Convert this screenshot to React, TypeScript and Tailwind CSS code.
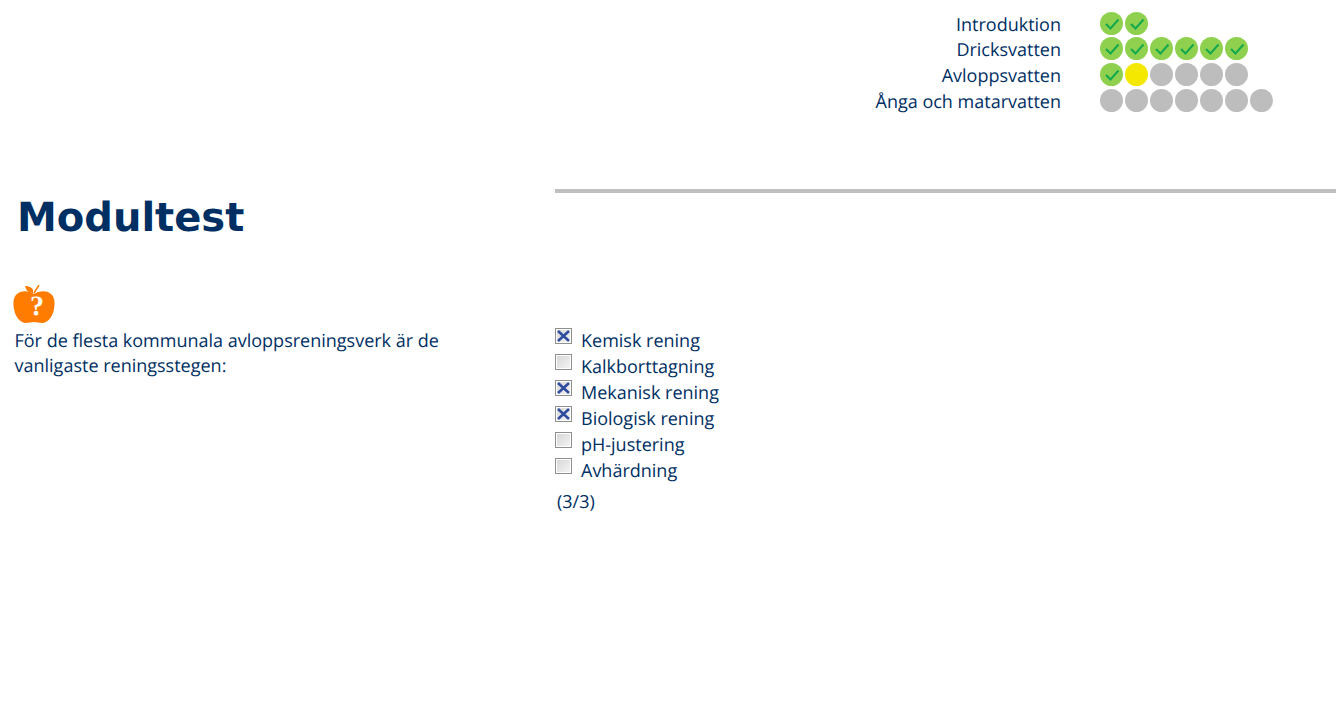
const progress = [
  { name: "Introduktion", rowClass: "h-[25px]", states: ["done", "done"] },
  { name: "Dricksvatten", rowClass: "h-[26px]", states: ["done", "done", "done", "done", "done", "done"] },
  { name: "Avloppsvatten", rowClass: "h-[26px]", states: ["done", "current", "todo", "todo", "todo", "todo"] },
  { name: "Ånga och matarvatten", rowClass: "h-[26px]", states: ["todo", "todo", "todo", "todo", "todo", "todo", "todo"] },
];

const options = [
  { label: "Kemisk rening", checked: true },
  { label: "Kalkborttagning", checked: false },
  { label: "Mekanisk rening", checked: true },
  { label: "Biologisk rening", checked: true },
  { label: "pH-justering", checked: false },
  { label: "Avhärdning", checked: false },
];

const Dot = ({ state }: { state: string }) => {
  if (state === "done") {
    return (
      <svg width="23" height="23" viewBox="0 0 23 23" className="shrink-0">
        <circle cx="11.5" cy="11.5" r="11.5" fill="#8fd14f" />
        <path d="M6 12 L10.5 16.5 L18.5 7.5" fill="none" stroke="#12a84e" strokeWidth="2" />
      </svg>
    );
  }
  return (
    <span
      className={
        state === "current"
          ? "w-[23px] h-[23px] rounded-full shrink-0 bg-[#f5e800]"
          : "w-[23px] h-[23px] rounded-full shrink-0 bg-[#bdbdbd]"
      }
    />
  );
};

const Checkbox = ({ checked }: { checked: boolean }) => (
  <svg width="17" height="16" viewBox="0 0 17 16" className="shrink-0">
    <defs>
      <linearGradient id="boxFill" x1="0" y1="0" x2="1" y2="1">
        <stop offset="0" stopColor="#d4d4d4" />
        <stop offset="1" stopColor="#f6f6f6" />
      </linearGradient>
    </defs>
    <rect x="0.5" y="0.5" width="16" height="15" fill="url(#boxFill)" stroke="#8f8f8f" />
    <rect x="1.5" y="1.5" width="14" height="13" fill="none" stroke="#ffffff" />
    {checked && <path d="M3 3 L14 13 M14 3 L3 13" stroke="#2f4da0" strokeWidth="2.6" />}
  </svg>
);

const AppleIcon = () => (
  <svg width="42" height="38" viewBox="0 0 42 38">
    <path
      d="M21 9 C16 6 9 5 4 9 C0 12 0 19 1 24 C2 31 7 38 13 38 C16 38 18 37 21 37 C24 37 26 38 29 38 C35 38 40 31 41 24 C42 19 42 12 38 9 C33 5 26 6 21 9 Z"
      fill="#ff7c00"
    />
    <path d="M20 8 C15 8 13 5 12 1 C17 1 21 3 20 8 Z" fill="#ff7c00" />
    <path d="M21 8 L26 0" stroke="#ff7c00" strokeWidth="1.5" />
    <text
      x="24"
      y="30"
      textAnchor="middle"
      fontSize="28"
      fontWeight="700"
      fontFamily="'Liberation Serif', serif"
      fill="#ffffff"
    >
      ?
    </text>
  </svg>
);

export default function App() {
  return (
    <div className="w-[1336px] h-[722px] bg-white overflow-hidden text-[18px] text-[#002f63] font-['Open_Sans',sans-serif] [text-rendering:geometricPrecision]">
      <div className="h-[189px] pt-[12px] flex">
        <div className="w-[1061px] pt-[0.6px] text-right whitespace-nowrap">
          {progress.map((row) => (
            <div key={row.name} className="leading-[25.67px]">
              {row.name}
            </div>
          ))}
        </div>
        <div className="ml-[39px]">
          {progress.map((row) => (
            <div key={row.name} className={`${row.rowClass} flex gap-[2px]`}>
              {row.states.map((s, i) => (
                <Dot key={i} state={s} />
              ))}
            </div>
          ))}
        </div>
      </div>

      <div className="ml-[555px] h-[4px] bg-[#c0c0c0]" />

      <h1 className="ml-[17px] text-[40px] leading-[50px] font-bold font-['DejaVu_Sans',sans-serif]">
        Modultest
      </h1>

      <div className="flex mt-[42px]">
        <div className="w-[555px] shrink-0">
          <div className="ml-[13px] h-[38px]">
            <AppleIcon />
          </div>
          <p className="ml-[14.5px] mt-[6px] w-[470px] leading-[25px]">
            För de flesta kommunala avloppsreningsverk är de vanligaste reningsstegen:
          </p>
        </div>
        <div className="pt-[42px]">
          {options.map((o) => (
            <div key={o.label} className="h-[26px] flex">
              <div className="pt-[1px]">
                <Checkbox checked={o.checked} />
              </div>
              <span className="ml-[9px] pt-[1px] leading-[26px]">{o.label}</span>
            </div>
          ))}
          <div className="ml-[2px] mt-[6px] leading-[26px]">(3/3)</div>
        </div>
      </div>
    </div>
  );
}
